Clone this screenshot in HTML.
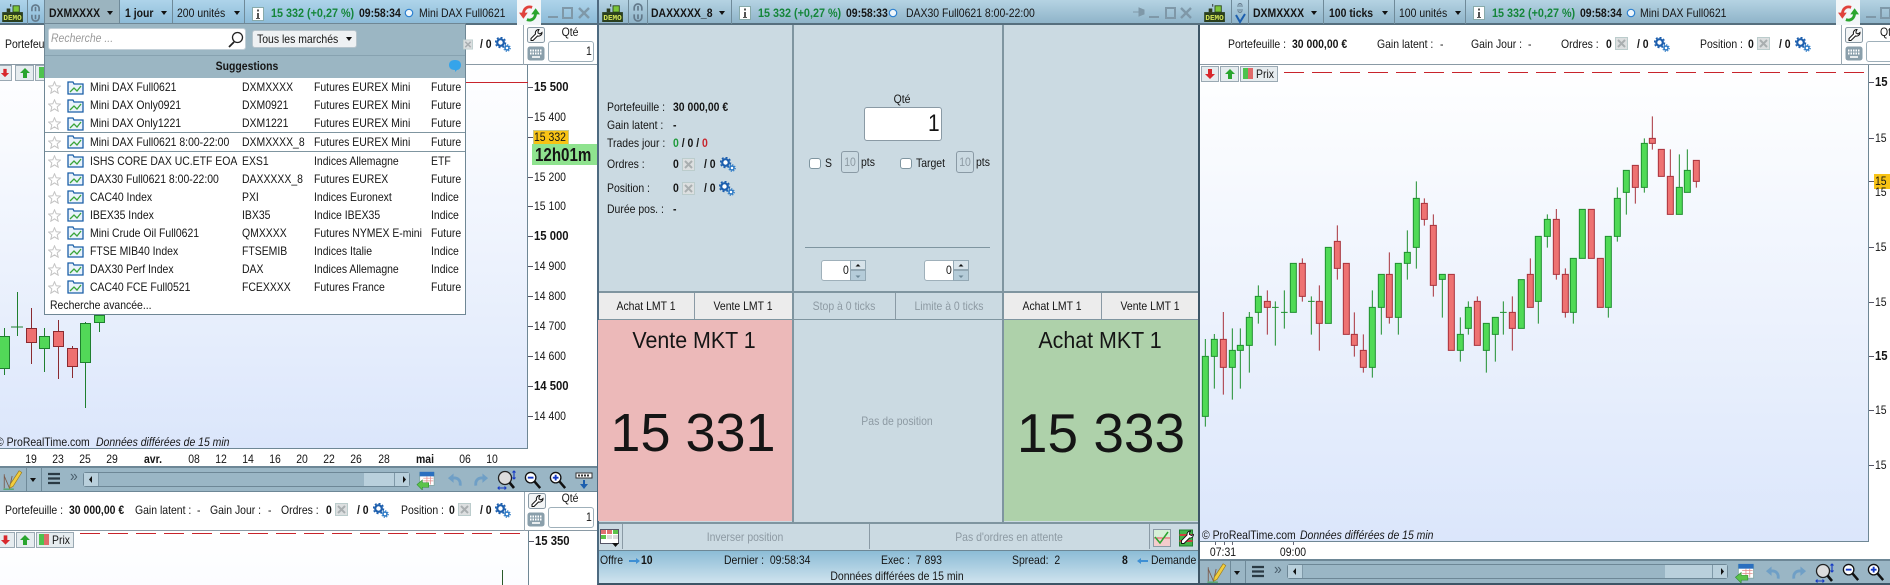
<!DOCTYPE html>
<html lang="fr"><head><meta charset="utf-8"><title>ProRealTime</title>
<style>
html,body{margin:0;padding:0;width:1890px;height:585px;overflow:hidden;background:#fff}
body{position:relative;font-family:"Liberation Sans",Arial,sans-serif;color:#151515}
.d{position:absolute;box-sizing:border-box}
.t{position:absolute;white-space:nowrap;font-size:12px;line-height:14px;transform:scaleX(.87);transform-origin:0 50%}
.c{position:absolute;white-space:nowrap;font-size:12px;line-height:14px;transform:translateX(-50%) scaleX(.87)}
.b{font-weight:bold}
.g{color:#8d9aa3}
.pr{color:#15863a;transform:scaleX(.9)}
.tb{background:linear-gradient(#b5d3e3,#8fb4c9);border-bottom:2px solid #566f7e}
.tb2{background:linear-gradient(#aed4ea,#8dbbd8);border-bottom:2px solid #566f7e}
.sep{position:absolute;width:1px;background:#6f8a99}
.chart{background:linear-gradient(#fff,#dbe6fb)}
.bar{background:#9ab6c5;border-top:2px solid #6d8796}
.btn{position:absolute;box-sizing:border-box;border:1px solid #9aa9b3;background:#e6ecef}
.inp{position:absolute;box-sizing:border-box;background:#fff;border:1px solid #9fb0ba;border-radius:3px}
.tick{position:absolute;width:5px;height:1px;background:#556}
.sb{position:absolute;box-sizing:border-box;border:1px solid #6d8796;border-radius:3px;background:#9ab6c5}
.sb i{position:absolute;top:0;bottom:0;display:block;box-sizing:border-box;background:#b9d0dc;border:0 solid #7f99a8}
.tri{position:absolute;width:0;height:0;border-left:3.5px solid transparent;border-right:3.5px solid transparent;border-top:4px solid #111}
</style></head><body>

<!-- LEFT WINDOW -->
<div class="d tb2" style="left:0;top:0;width:597px;height:25px"></div>
<div class="d" style="left:44px;top:0;width:75px;height:24px;background:#9bb4bf"></div>
<div class="sep" style="left:27px;top:0;height:24px"></div>
<div class="sep" style="left:44px;top:0;height:24px"></div>
<div class="sep" style="left:119px;top:0;height:24px"></div>
<div class="sep" style="left:172px;top:0;height:24px"></div>
<div class="sep" style="left:244px;top:0;height:24px"></div>
<span class="t b" style="left:49px;top:6px">DXMXXXX</span><div class="tri" style="left:107px;top:11px"></div>
<span class="t b" style="left:125px;top:6px">1 jour</span><div class="tri" style="left:161px;top:11px"></div>
<span class="t" style="left:177px;top:6px">200 unités</span><div class="tri" style="left:234px;top:11px"></div>
<span class="t b pr" style="left:271px;top:6px">15 332 (+0,27 %)</span>
<span class="t b" style="left:359px;top:6px">09:58:34</span>
<span class="t" style="left:419px;top:6px">Mini DAX Full0621</span>
<div class="d" style="left:517px;top:0;width:24px;height:27px;background:#f2f6f8"></div>

<div class="d" style="left:0;top:25px;width:597px;height:40px;background:#fff;border-bottom:1px solid #8a9aa5"></div>
<span class="t" style="left:5px;top:37px">Portefeuille :</span>
<span class="t b" style="left:480px;top:37px">/ 0</span>
<div class="sep" style="left:523px;top:25px;height:40px;background:#9aa9b3"></div>
<span class="c" style="left:570px;top:25px">Qté</span>
<div class="inp" style="left:548px;top:41px;width:46px;height:21px"></div>
<span class="t" style="left:586px;top:44px">1</span>

<div class="d chart" style="left:0;top:65px;width:528px;height:384px;border-right:1px solid #6f8795;border-bottom:1px solid #6f8795"></div>
<div class="d" style="left:466px;top:82px;width:62px;height:1px;background:#c8242c"></div>
<span class="t" style="left:-4px;top:435px">© ProRealTime.com</span>
<span class="t" style="left:96px;top:435px;font-style:italic">Données différées de 15 min</span>

<div class="tick" style="left:528px;top:87px"></div><span class="t b" style="left:534px;top:80px;font-size:13px">15 500</span>
<div class="tick" style="left:528px;top:117px"></div><span class="t" style="left:534px;top:110px">15 400</span>
<div class="tick" style="left:528px;top:177px"></div><span class="t" style="left:534px;top:170px">15 200</span>
<div class="tick" style="left:528px;top:206px"></div><span class="t" style="left:534px;top:199px">15 100</span>
<div class="tick" style="left:528px;top:236px"></div><span class="t b" style="left:534px;top:229px;font-size:13px">15 000</span>
<div class="tick" style="left:528px;top:266px"></div><span class="t" style="left:534px;top:259px">14 900</span>
<div class="tick" style="left:528px;top:296px"></div><span class="t" style="left:534px;top:289px">14 800</span>
<div class="tick" style="left:528px;top:326px"></div><span class="t" style="left:534px;top:319px">14 700</span>
<div class="tick" style="left:528px;top:356px"></div><span class="t" style="left:534px;top:349px">14 600</span>
<div class="tick" style="left:528px;top:386px"></div><span class="t b" style="left:534px;top:379px;font-size:13px">14 500</span>
<div class="tick" style="left:528px;top:416px"></div><span class="t" style="left:534px;top:409px">14 400</span>
<div class="tick" style="left:528px;top:137px"></div>
<div class="d" style="left:533px;top:130px;width:36px;height:15px;background:#f8c315;border:1px solid #c9c98a"></div>
<span class="t" style="left:534px;top:130px">15 332</span>
<div class="d" style="left:532px;top:144px;width:65px;height:21px;background:#8fe38f"></div>
<span class="t b" style="left:535px;top:146px;font-size:18px;line-height:18px;transform:scaleX(.84)">12h01m</span>

<span class="c" style="left:31px;top:452px">19</span><span class="c" style="left:58px;top:452px">23</span><span class="c" style="left:85px;top:452px">25</span><span class="c" style="left:112px;top:452px">29</span><span class="c b" style="left:153px;top:452px">avr.</span><span class="c" style="left:194px;top:452px">08</span><span class="c" style="left:221px;top:452px">12</span><span class="c" style="left:248px;top:452px">14</span><span class="c" style="left:275px;top:452px">16</span><span class="c" style="left:302px;top:452px">20</span><span class="c" style="left:329px;top:452px">22</span><span class="c" style="left:356px;top:452px">26</span><span class="c" style="left:384px;top:452px">28</span><span class="c b" style="left:425px;top:452px">mai</span><span class="c" style="left:465px;top:452px">06</span><span class="c" style="left:492px;top:452px">10</span>

<div class="d bar" style="left:0;top:466px;width:597px;height:26px;border-bottom:1px solid #6d8796"></div>
<div class="sep" style="left:26px;top:468px;height:23px"></div><div class="sep" style="left:41px;top:468px;height:23px"></div>
<div class="tri" style="left:30px;top:478px"></div>
<span class="t" style="left:70px;top:470px;color:#4b5f6c;font-size:16px">»</span>
<div class="sb" style="left:83px;top:472px;width:327px;height:15px"><i style="left:0;width:15px;border-right-width:1px"></i><i style="left:280px;width:31px;border-right-width:1px"></i><i style="right:0;width:15px;border-left-width:1px"></i></div>

<div class="d" style="left:0;top:492px;width:597px;height:39px;background:#fff;border-bottom:1px solid #8a9aa5"></div>
<span class="t" style="left:5px;top:503px">Portefeuille :</span><span class="t b" style="left:69px;top:503px">30 000,00 €</span>
<span class="t" style="left:135px;top:503px">Gain latent :</span><span class="t" style="left:197px;top:503px">-</span>
<span class="t" style="left:210px;top:503px">Gain Jour :</span><span class="t" style="left:268px;top:503px">-</span>
<span class="t" style="left:281px;top:503px">Ordres :</span><span class="t b" style="left:326px;top:503px">0</span><span class="t b" style="left:357px;top:503px">/ 0</span>
<span class="t" style="left:401px;top:503px">Position :</span><span class="t b" style="left:449px;top:503px">0</span><span class="t b" style="left:480px;top:503px">/ 0</span>
<div class="sep" style="left:524px;top:492px;height:39px;background:#9aa9b3"></div>
<span class="c" style="left:570px;top:491px">Qté</span>
<div class="inp" style="left:548px;top:507px;width:46px;height:21px"></div>
<span class="t" style="left:586px;top:510px">1</span>

<div class="d chart" style="left:0;top:531px;width:529px;height:60px;background:linear-gradient(#fff,#fbfcff);border-right:1px solid #6f8795"></div>
<div class="d" style="left:80px;top:533px;width:443px;height:1px;background:repeating-linear-gradient(90deg,#c8242c 0 20px,transparent 20px 28px)"></div>
<div class="tick" style="left:529px;top:541px"></div><span class="t b" style="left:535px;top:534px;font-size:13px">15 350</span>
<div class="btn" style="left:-2px;top:532px;width:17px;height:16px"></div>
<div class="btn" style="left:16px;top:532px;width:19px;height:16px"></div>
<div class="btn" style="left:36px;top:532px;width:38px;height:16px"></div>
<div class="d" style="left:39px;top:534px;width:5px;height:11px;background:#4ec24e"></div>
<div class="d" style="left:44px;top:534px;width:5px;height:11px;background:#e06a6a"></div>
<span class="t" style="left:52px;top:533px">Prix</span>

<!-- top row buttons, left chart -->
<div class="btn" style="left:-5px;top:65px;width:17px;height:16px"></div>
<div class="btn" style="left:15px;top:65px;width:19px;height:16px"></div>
<div class="btn" style="left:35px;top:65px;width:12px;height:16px"></div>
<div class="d" style="left:39px;top:67px;width:5px;height:11px;background:#4ec24e"></div>

<!-- left candles -->
<svg class="d" style="left:0;top:0" width="597" height="585">
<g stroke-width="1" shape-rendering="crispEdges">
<path stroke="#1f7f2f" d="M4.500 328V375M17.500 292V336M44.500 328V372M85.500 322V408M99.500 314V332M11 327H23"/>
<path stroke="#8a2a30" d="M31.500 308V364M58.500 320V379M72.500 346V378"/>
<path fill="#52d858" stroke="#1f7f2f" d="M-1.500 336.500h11V368.500h-11zM39.500 336.500h10V348.500h-10zM80.500 323.500h10V362.500h-10zM94.500 315.500h10V322.500h-10z"/>
<path fill="#ee7070" stroke="#8a2a30" d="M26.500 328.500h10V342.500h-10zM53.500 331.500h10V346.500h-10zM67.500 348.500h10V366.500h-10z"/>
</g>
<path stroke="#2a5a2a" d="M502.500 570V585"/>
</svg>

<!-- DROPDOWN -->
<div class="d" style="left:44px;top:23px;width:422px;height:292px;background:#fff;border:1px solid #6f8795">
 <div class="d" style="left:0;top:0;width:420px;height:54px;background:#9bb6c3"></div>
 <div class="d" style="left:0;top:31px;width:420px;height:1px;background:#87a2b0"></div>
</div>
<div class="inp" style="left:48px;top:28px;width:198px;height:22px;border-color:#c3d0d8"></div>
<span class="t" style="left:51px;top:31px;color:#9a9a9a;font-style:italic">Recherche ...</span>
<div class="d" style="left:252px;top:30px;width:105px;height:18px;background:#eef1f3;border:1px solid #b6c4cc;border-radius:3px"></div>
<span class="t" style="left:257px;top:32px">Tous les marchés</span><div class="tri" style="left:346px;top:37px"></div>
<span class="c b" style="left:247px;top:59px">Suggestions</span>
<div class="d" style="left:45px;top:132px;width:420px;height:1px;background:#7f95a0"></div>
<div class="d" style="left:45px;top:151px;width:420px;height:1px;background:#7f95a0"></div>

<span class="t" style="left:90px;top:80px">Mini DAX Full0621</span><span class="t" style="left:242px;top:80px">DXMXXXX</span><span class="t" style="left:314px;top:80px">Futures EUREX Mini</span><span class="t" style="left:431px;top:80px">Future</span>
<span class="t" style="left:90px;top:98px">Mini DAX Only0921</span><span class="t" style="left:242px;top:98px">DXM0921</span><span class="t" style="left:314px;top:98px">Futures EUREX Mini</span><span class="t" style="left:431px;top:98px">Future</span>
<span class="t" style="left:90px;top:116px">Mini DAX Only1221</span><span class="t" style="left:242px;top:116px">DXM1221</span><span class="t" style="left:314px;top:116px">Futures EUREX Mini</span><span class="t" style="left:431px;top:116px">Future</span>
<span class="t" style="left:90px;top:135px">Mini DAX Full0621 8:00-22:00</span><span class="t" style="left:242px;top:135px">DXMXXXX_8</span><span class="t" style="left:314px;top:135px">Futures EUREX Mini</span><span class="t" style="left:431px;top:135px">Future</span>
<span class="t" style="left:90px;top:154px">ISHS CORE DAX UC.ETF EOA</span><span class="t" style="left:242px;top:154px">EXS1</span><span class="t" style="left:314px;top:154px">Indices Allemagne</span><span class="t" style="left:431px;top:154px">ETF</span>
<span class="t" style="left:90px;top:172px">DAX30 Full0621 8:00-22:00</span><span class="t" style="left:242px;top:172px">DAXXXXX_8</span><span class="t" style="left:314px;top:172px">Futures EUREX</span><span class="t" style="left:431px;top:172px">Future</span>
<span class="t" style="left:90px;top:190px">CAC40 Index</span><span class="t" style="left:242px;top:190px">PXI</span><span class="t" style="left:314px;top:190px">Indices Euronext</span><span class="t" style="left:431px;top:190px">Indice</span>
<span class="t" style="left:90px;top:208px">IBEX35 Index</span><span class="t" style="left:242px;top:208px">IBX35</span><span class="t" style="left:314px;top:208px">Indice IBEX35</span><span class="t" style="left:431px;top:208px">Indice</span>
<span class="t" style="left:90px;top:226px">Mini Crude Oil Full0621</span><span class="t" style="left:242px;top:226px">QMXXXX</span><span class="t" style="left:314px;top:226px">Futures NYMEX E-mini</span><span class="t" style="left:431px;top:226px">Future</span>
<span class="t" style="left:90px;top:244px">FTSE MIB40 Index</span><span class="t" style="left:242px;top:244px">FTSEMIB</span><span class="t" style="left:314px;top:244px">Indices Italie</span><span class="t" style="left:431px;top:244px">Indice</span>
<span class="t" style="left:90px;top:262px">DAX30 Perf Index</span><span class="t" style="left:242px;top:262px">DAX</span><span class="t" style="left:314px;top:262px">Indices Allemagne</span><span class="t" style="left:431px;top:262px">Indice</span>
<span class="t" style="left:90px;top:280px">CAC40 FCE Full0521</span><span class="t" style="left:242px;top:280px">FCEXXXX</span><span class="t" style="left:314px;top:280px">Futures France</span><span class="t" style="left:431px;top:280px">Future</span>
<span class="t" style="left:50px;top:298px">Recherche avancée...</span>

<!-- MIDDLE WINDOW -->
<div class="d" style="left:597px;top:0;width:603px;height:585px;background:#cbdae2;border-left:2px solid #4e6a80;border-right:2px solid #3d5566;border-bottom:2px solid #3d5566"></div>
<div class="d tb" style="left:597px;top:0;width:603px;height:25px;border-left:2px solid #4e6a80"></div>
<div class="sep" style="left:628px;top:0;height:24px"></div><div class="sep" style="left:647px;top:0;height:24px"></div><div class="sep" style="left:731px;top:0;height:24px"></div>
<span class="t b" style="left:651px;top:6px">DAXXXXX_8</span><div class="tri" style="left:719px;top:11px"></div>
<span class="t b pr" style="left:758px;top:6px">15 332 (+0,27 %)</span>
<span class="t b" style="left:846px;top:6px">09:58:33</span>
<span class="t" style="left:906px;top:6px">DAX30 Full0621 8:00-22:00</span>

<div class="d" style="left:792px;top:25px;width:2px;height:497px;background:#7f95a0"></div>
<div class="d" style="left:1002px;top:25px;width:2px;height:497px;background:#7f95a0"></div>

<span class="t" style="left:607px;top:100px">Portefeuille :</span><span class="t b" style="left:673px;top:100px">30 000,00 €</span>
<span class="t" style="left:607px;top:118px">Gain latent :</span><span class="t b" style="left:673px;top:118px">-</span>
<span class="t" style="left:607px;top:136px">Trades jour :</span><span class="t b" style="left:673px;top:136px"><span style="color:#1e9a3a">0</span> / 0 / <span style="color:#c8242c">0</span></span>
<span class="t" style="left:607px;top:157px">Ordres :</span><span class="t b" style="left:673px;top:157px">0</span><span class="t b" style="left:704px;top:157px">/ 0</span>
<span class="t" style="left:607px;top:181px">Position :</span><span class="t b" style="left:673px;top:181px">0</span><span class="t b" style="left:704px;top:181px">/ 0</span>
<span class="t" style="left:607px;top:202px">Durée pos. :</span><span class="t b" style="left:673px;top:202px">-</span>

<span class="c" style="left:902px;top:92px">Qté</span>
<div class="inp" style="left:864px;top:107px;width:78px;height:34px;border-color:#8a9aa5"></div>
<span class="t" style="left:928px;top:110px;font-size:24px;line-height:28px">1</span>
<div class="inp" style="left:809px;top:158px;width:12px;height:11px;border-color:#7f95a0"></div>
<span class="t" style="left:825px;top:156px">S</span>
<div class="d" style="left:841px;top:151px;width:18px;height:22px;border:1px solid #8a9aa5;border-radius:3px"></div>
<span class="c g" style="left:850px;top:155px">10</span>
<span class="t" style="left:861px;top:155px">pts</span>
<div class="inp" style="left:900px;top:158px;width:12px;height:11px;border-color:#7f95a0"></div>
<span class="t" style="left:916px;top:156px">Target</span>
<div class="d" style="left:956px;top:151px;width:18px;height:22px;border:1px solid #8a9aa5;border-radius:3px"></div>
<span class="c g" style="left:965px;top:155px">10</span>
<span class="t" style="left:976px;top:155px">pts</span>
<div class="d" style="left:805px;top:247px;width:185px;height:1px;background:#7f95a0"></div>

<div class="inp" style="left:821px;top:260px;width:45px;height:21px"></div><span class="t" style="left:843px;top:263px">0</span>
<div class="d" style="left:850px;top:260px;width:16px;height:10px;background:#d7e3ea;border:1px solid #93a8b4"></div><div class="d" style="left:850px;top:270px;width:16px;height:11px;background:#b5ccd9;border:1px solid #93a8b4"></div>
<div class="inp" style="left:924px;top:260px;width:45px;height:21px"></div><span class="t" style="left:946px;top:263px">0</span>
<div class="d" style="left:953px;top:260px;width:16px;height:10px;background:#d7e3ea;border:1px solid #93a8b4"></div><div class="d" style="left:953px;top:270px;width:16px;height:11px;background:#b5ccd9;border:1px solid #93a8b4"></div>

<div class="d" style="left:599px;top:291px;width:599px;height:2px;background:#7f95a0"></div>
<div class="d" style="left:599px;top:293px;width:193px;height:26px;background:#ececec"></div>
<div class="d" style="left:1004px;top:293px;width:194px;height:26px;background:#ececec"></div>
<div class="sep" style="left:694px;top:293px;height:26px;background:#8a9aa5"></div>
<div class="sep" style="left:895px;top:293px;height:26px;background:#8a9aa5"></div>
<div class="sep" style="left:1101px;top:293px;height:26px;background:#8a9aa5"></div>
<span class="c" style="left:646px;top:299px">Achat LMT 1</span>
<span class="c" style="left:743px;top:299px">Vente LMT 1</span>
<span class="c g" style="left:844px;top:299px">Stop à 0 ticks</span>
<span class="c g" style="left:949px;top:299px">Limite à 0 ticks</span>
<span class="c" style="left:1052px;top:299px">Achat LMT 1</span>
<span class="c" style="left:1150px;top:299px">Vente LMT 1</span>

<div class="d" style="left:599px;top:319px;width:599px;height:1px;background:#7f95a0"></div>
<div class="d" style="left:598px;top:320px;width:194px;height:201px;background:#ecb9b9"></div>
<div class="d" style="left:1004px;top:320px;width:194px;height:201px;background:#aed1aa"></div>
<span class="c" style="left:694px;top:326px;font-size:23px;line-height:28px;transform:translateX(-50%) scaleX(.93)">Vente MKT 1</span>
<span class="c" style="left:1100px;top:326px;font-size:23px;line-height:28px;transform:translateX(-50%) scaleX(.93)">Achat MKT 1</span>
<span class="c" style="left:693px;top:401px;font-size:54px;line-height:64px;transform:translateX(-50%)">15 331</span>
<span class="c" style="left:1101px;top:401px;font-size:55px;line-height:64px;transform:translateX(-50%)">15 333</span>
<span class="c g" style="left:897px;top:414px">Pas de position</span>

<div class="d" style="left:599px;top:522px;width:599px;height:2px;background:#7f95a0"></div>
<div class="sep" style="left:622px;top:524px;height:25px;background:#8a9aa5"></div>
<div class="sep" style="left:869px;top:524px;height:25px;background:#8a9aa5"></div>
<div class="sep" style="left:1149px;top:524px;height:25px;background:#8a9aa5"></div>
<span class="c g" style="left:745px;top:530px">Inverser position</span>
<span class="c g" style="left:1009px;top:530px">Pas d'ordres en attente</span>

<div class="d" style="left:599px;top:550px;width:599px;height:33px;background:linear-gradient(#8cbcd6,#cfe3ee);border-top:1px solid #6d8796"></div>
<span class="t" style="left:600px;top:553px">Offre</span><span class="t b" style="left:641px;top:553px">10</span>
<span class="t" style="left:724px;top:553px">Dernier :&nbsp; 09:58:34</span>
<span class="t" style="left:881px;top:553px">Exec :&nbsp; 7 893</span>
<span class="t" style="left:1012px;top:553px">Spread:&nbsp; 2</span>
<span class="t b" style="left:1122px;top:553px">8</span>
<span class="t" style="left:1151px;top:553px">Demande</span>
<span class="c" style="left:897px;top:569px">Données différées de 15 min</span>

<!-- RIGHT WINDOW -->
<div class="d tb" style="left:1200px;top:0;width:690px;height:25px"></div>
<div class="sep" style="left:1231px;top:0;height:24px"></div><div class="sep" style="left:1248px;top:0;height:24px"></div><div class="sep" style="left:1323px;top:0;height:24px"></div><div class="sep" style="left:1394px;top:0;height:24px"></div><div class="sep" style="left:1465px;top:0;height:24px"></div>
<span class="t b" style="left:1253px;top:6px">DXMXXXX</span><div class="tri" style="left:1311px;top:11px"></div>
<span class="t b" style="left:1329px;top:6px">100 ticks</span><div class="tri" style="left:1382px;top:11px"></div>
<span class="t" style="left:1399px;top:6px">100 unités</span><div class="tri" style="left:1455px;top:11px"></div>
<span class="t b pr" style="left:1492px;top:6px">15 332 (+0,27 %)</span>
<span class="t b" style="left:1580px;top:6px">09:58:34</span>
<span class="t" style="left:1640px;top:6px">Mini DAX Full0621</span>
<div class="d" style="left:1836px;top:0;width:24px;height:27px;background:#f2f6f8"></div>

<div class="d" style="left:1200px;top:25px;width:690px;height:40px;background:#fff;border-bottom:1px solid #8a9aa5"></div>
<span class="t" style="left:1228px;top:37px">Portefeuille :</span><span class="t b" style="left:1292px;top:37px">30 000,00 €</span>
<span class="t" style="left:1377px;top:37px">Gain latent :</span><span class="t" style="left:1440px;top:37px">-</span>
<span class="t" style="left:1471px;top:37px">Gain Jour :</span><span class="t" style="left:1528px;top:37px">-</span>
<span class="t" style="left:1561px;top:37px">Ordres :</span><span class="t b" style="left:1606px;top:37px">0</span><span class="t b" style="left:1637px;top:37px">/ 0</span>
<span class="t" style="left:1700px;top:37px">Position :</span><span class="t b" style="left:1748px;top:37px">0</span><span class="t b" style="left:1779px;top:37px">/ 0</span>
<div class="sep" style="left:1841px;top:25px;height:40px;background:#9aa9b3"></div>
<span class="t" style="left:1880px;top:25px">Qté</span>
<div class="inp" style="left:1866px;top:41px;width:46px;height:21px"></div>

<div class="d chart" style="left:1200px;top:65px;width:669px;height:477px;border-right:1px solid #6f8795;border-bottom:1px solid #6f8795"></div>
<div class="d" style="left:1284px;top:72px;width:580px;height:1px;background:repeating-linear-gradient(90deg,#c8242c 0 20px,transparent 20px 28px)"></div>
<div class="btn" style="left:1201px;top:66px;width:18px;height:16px"></div>
<div class="btn" style="left:1220px;top:66px;width:19px;height:16px"></div>
<div class="btn" style="left:1240px;top:66px;width:38px;height:16px"></div>
<div class="d" style="left:1243px;top:68px;width:5px;height:11px;background:#4ec24e"></div>
<div class="d" style="left:1248px;top:68px;width:5px;height:11px;background:#e06a6a"></div>
<span class="t" style="left:1256px;top:67px">Prix</span>
<span class="t" style="left:1202px;top:528px">© ProRealTime.com</span>
<span class="t" style="left:1300px;top:528px;font-style:italic">Données différées de 15 min</span>

<div class="tick" style="left:1869px;top:82px"></div><span class="t b" style="left:1875px;top:75px;font-size:13px">15</span>
<div class="tick" style="left:1869px;top:138px"></div><span class="t" style="left:1875px;top:131px">15</span>
<div class="tick" style="left:1869px;top:181px"></div>
<div class="d" style="left:1874px;top:174px;width:18px;height:15px;background:#f8c315"></div><span class="t" style="left:1875px;top:174px">15</span>
<span class="t" style="left:1875px;top:185px">15</span>
<div class="tick" style="left:1869px;top:247px"></div><span class="t" style="left:1875px;top:240px">15</span>
<div class="tick" style="left:1869px;top:302px"></div><span class="t" style="left:1875px;top:295px">15</span>
<div class="tick" style="left:1869px;top:356px"></div><span class="t b" style="left:1875px;top:349px;font-size:13px">15</span>
<div class="tick" style="left:1869px;top:410px"></div><span class="t" style="left:1875px;top:403px">15</span>
<div class="tick" style="left:1869px;top:465px"></div><span class="t" style="left:1875px;top:458px">15</span>

<span class="c" style="left:1223px;top:545px">07:31</span><span class="c" style="left:1293px;top:545px">09:00</span>
<div class="d" style="left:1215px;top:542px;width:1px;height:3px;background:#667"></div><div class="d" style="left:1224px;top:542px;width:1px;height:3px;background:#667"></div><div class="d" style="left:1232px;top:542px;width:1px;height:3px;background:#667"></div><div class="d" style="left:1293px;top:542px;width:1px;height:3px;background:#667"></div>

<div class="d bar" style="left:1200px;top:559px;width:690px;height:26px;border-bottom:2px solid #3d5566"></div>
<div class="sep" style="left:1230px;top:561px;height:22px"></div><div class="sep" style="left:1245px;top:561px;height:22px"></div>
<div class="tri" style="left:1234px;top:571px"></div>
<span class="t" style="left:1274px;top:563px;color:#4b5f6c;font-size:16px">»</span>
<div class="sb" style="left:1287px;top:564px;width:441px;height:15px"><i style="left:0;width:15px;border-right-width:1px"></i><i style="left:377px;width:49px;border-right-width:1px"></i><i style="right:0;width:15px;border-left-width:1px"></i></div>

<!-- right candles -->
<svg class="d" style="left:0;top:0" width="1890" height="585">
<g transform="translate(1198 100) scale(.33333)" stroke-width="3">
 <path fill="none" stroke="#1f8f2f" d="M22 717V980M49 702V866M103 685V899M127 685V866M154 636V818M181 556V671M232 604V737M222 622H242M259 571V686M249 637H269M340 589V704M330 604H350M523 571V833M550 523V704M601 490V704M628 391V539M655 244V506M733 523V653M787 652V785"/>
 <path fill="none" stroke="#a8323c" d="M76 636V884M208 571V704M313 475V605M364 556V752M418 376V539M469 637V770M496 703V818M574 457V671M679 295V377M706 343V590"/>
 <path fill="#50da56" stroke="#1f8f2f" d="M13 769h18V949h-18zM40 718h18V769h-18zM94 751h18V802h-18zM118 736h18V751h-18zM145 652h18V736h-18zM172 589h18V637h-18zM277 490h18V637h-18zM382 442h18V670h-18zM514 622h18V802h-18zM541 523h18V622h-18zM592 490h18V652h-18zM619 457h18V490h-18zM646 295h18V442h-18zM724 523h18V538h-18zM778 703h18V751h-18z"/>
 <path fill="#ee7272" stroke="#a8323c" d="M67 718h18V802h-18zM199 604h18V622h-18zM304 490h18V589h-18zM355 604h18V670h-18zM409 424h18V505h-18zM436 490h18V703h-18zM460 703h18V736h-18zM487 751h18V802h-18zM565 523h18V652h-18zM670 310h18V358h-18zM697 376h18V556h-18zM751 523h18V751h-18z"/>
</g>
<g transform="translate(1460 100) scale(.33333)" stroke-width="3">
 <path fill="none" stroke="#1f8f2f" d="M25 604V704M79 670V818M106 652V785M130 604V704M120 637H140M235 409V671M262 343V443M340 475V671M445 409V653M472 262V425M499 211V344M553 115V278M658 163V343M682 148V277"/>
 <path fill="none" stroke="#a8323c" d="M52 589V736M157 589V752M211 475V622M289 327V539M316 505V653M526 196V311M577 49V149M631 148V343M709 181V263"/>
 <path fill="#50da56" stroke="#1f8f2f" d="M16 622h18V685h-18zM70 670h18V751h-18zM97 652h18V703h-18zM175 539h18V685h-18zM226 409h18V604h-18zM253 358h18V409h-18zM331 475h18V637h-18zM358 328h18V475h-18zM436 409h18V622h-18zM463 295h18V409h-18zM490 211h18V277h-18zM544 130h18V262h-18zM649 262h18V343h-18zM673 211h18V277h-18z"/>
 <path fill="#ee7272" stroke="#a8323c" d="M43 604h18V736h-18zM148 637h18V685h-18zM202 523h18V622h-18zM280 358h18V523h-18zM307 523h18V637h-18zM385 328h18V475h-18zM412 475h18V622h-18zM517 196h18V262h-18zM568 115h18V130h-18zM595 148h18V229h-18zM622 229h18V343h-18zM700 181h18V244h-18z"/>
</g>
</svg>

<!-- ICONS -->
<svg class="d" style="left:0;top:0;pointer-events:none" width="1890" height="585" font-family="Liberation Sans, sans-serif">
<defs>
 <symbol id="demo" viewBox="0 0 24 20" overflow="visible"><rect x="9" y="0" width="1" height="3" fill="#222"/><rect x="12" y="2" width="7" height="7" fill="#7cc63a" stroke="#2c4a1a"/><rect x="5" y="5" width="4" height="4" fill="#2c3a1c"/><rect x="0" y="9" width="23" height="11" fill="#2a3f1d"/><text x="11.500" y="18" font-size="8.500" font-weight="bold" fill="#d3e65a" text-anchor="middle" font-family="Liberation Mono, monospace">DEMO</text></symbol>
 <symbol id="link" viewBox="0 0 12 20"><path d="M2 8V5a4 4 0 0 1 8 0v3M6 3v5M2 12v3a4 4 0 0 0 8 0v-3M6 12v5" fill="none" stroke="#63798a" stroke-width="1.800"/></symbol>
 <symbol id="info" viewBox="0 0 12 14"><rect x=".5" y=".5" width="11" height="13" fill="#fff" stroke="#8aa"/><rect x="5" y="2.500" width="2" height="2" fill="#555"/><rect x="5" y="6" width="2" height="6" fill="#555"/><rect x="4" y="11" width="4" height="1" fill="#555"/></symbol>
 <symbol id="ring" viewBox="0 0 10 10"><circle cx="5" cy="5" r="3.700" fill="#eef6fb" stroke="#2a7fd0" stroke-width="1.200"/></symbol>
 <symbol id="sync" viewBox="0 0 24 24"><path d="M15 5C9 3 5 7 5 13" fill="none" stroke="#e0423c" stroke-width="3.200"/><path d="M0 11h10l-5 7z" fill="#e0423c"/><path d="M9 19c6 2 10-2 10-8" fill="none" stroke="#2aa52e" stroke-width="3.200"/><path d="M14 13h10l-5-7z" fill="#2aa52e"/></symbol>
 <symbol id="wr" viewBox="0 0 18 16"><rect x=".5" y=".5" width="17" height="15" rx="2" fill="#f3f5f6" stroke="#8a9aa5"/><path d="M12 2.500a3.500 3.500 0 0 0-3.500 4.500L4 11.500v2h2L10.500 9a3.500 3.500 0 0 0 4.500-3.500l-2 1.500-2-1V4.500z" fill="#fff" stroke="#111" stroke-width="1"/></symbol>
 <symbol id="kb" viewBox="0 0 18 15"><rect x=".5" y=".5" width="17" height="14" rx="2.500" fill="#8a9fab"/><path d="M3 4.500h12M3 7.500h12" stroke="#fff" stroke-width="2" stroke-dasharray="1.500 1"/><path d="M5 11h8" stroke="#fff" stroke-width="1.600"/></symbol>
 <symbol id="gear" viewBox="0 0 16 15"><circle cx="5.500" cy="5.500" r="3.300" fill="#fff" stroke="#1d5fae" stroke-width="2.200"/><circle cx="5.500" cy="5.500" r="5" fill="none" stroke="#1d5fae" stroke-width="1.500" stroke-dasharray="2 1.900"/><circle cx="12" cy="11" r="2" fill="#fff" stroke="#2a78c4" stroke-width="1.500"/><circle cx="12" cy="11" r="3.300" fill="none" stroke="#2a78c4" stroke-width="1" stroke-dasharray="1.300 1.300"/></symbol>
 <symbol id="xd" viewBox="0 0 13 13"><rect x=".5" y=".5" width="12" height="12" fill="#dcdfe0" stroke="#bcc"/><path d="M3 3l7 7M10 3l-7 7" stroke="#a9aeb0" stroke-width="2"/></symbol>
 <symbol id="star" viewBox="0 0 13 13"><polygon points="6.500,.8 8.200,4.800 12.400,5.100 9.200,7.900 10.200,12.200 6.500,9.900 2.800,12.200 3.800,7.900 .6,5.100 4.800,4.800" fill="#fff" stroke="#c4c4c4"/></symbol>
 <symbol id="mini" viewBox="0 0 17 14"><path d="M1 1h5l1 2h9v10H1z" fill="#eaf3fb" stroke="#1b5fa8" stroke-width="1.300"/><path d="M3 11l4-4 3 3 4-5" fill="none" stroke="#3aa53a" stroke-width="1.300"/></symbol>
 <symbol id="dn" viewBox="0 0 12 12"><path d="M4 1h4v5h3L6 11 1 6h3z" fill="#d8282c"/></symbol>
 <symbol id="up" viewBox="0 0 12 12"><path d="M4 11h4V6h3L6 1 1 6h3z" fill="#2aa52e"/></symbol>
 <symbol id="draw" viewBox="0 0 24 24"><path d="M2 8l6 14M2 22V6M8 22l3-14" stroke="#7b5a4a" stroke-width="1" fill="none"/><path d="M1 23h12" stroke="#2a9a3a" stroke-width="1"/><path d="M19 2l3 2-10 16-4 2 1-5z" fill="#f2cd3c" stroke="#9a7d20" stroke-width=".8"/></symbol>
 <symbol id="ham" viewBox="0 0 14 13"><path d="M1 2h12M1 6.500h12M1 11h12" stroke="#2a3a44" stroke-width="2.200"/></symbol>
 <symbol id="cal" viewBox="0 0 20 22"><rect x="3" y="3" width="16" height="14" fill="#fff" stroke="#8aa"/><rect x="3" y="2" width="16" height="5" fill="#2a6fbf"/><path d="M7 9h11M7 12h11M11 7v9M15 7v9" stroke="#e08a8a" stroke-width=".8"/><path d="M0 16l6-5v3h7v5H6v3z" fill="#5cc34a" stroke="#2a8a2a" stroke-width=".6"/></symbol>
 <symbol id="und" viewBox="0 0 16 16"><path d="M14 14c1-6-3-9-8-8" fill="none" stroke="#6f9fc6" stroke-width="3"/><path d="M7 1L1 6l6 5z" fill="#6f9fc6"/></symbol>
 <symbol id="red" viewBox="0 0 16 16"><path d="M2 14c-1-6 3-9 8-8" fill="none" stroke="#6f9fc6" stroke-width="3"/><path d="M9 1l6 5-6 5z" fill="#6f9fc6"/></symbol>
 <symbol id="zf" viewBox="0 0 20 20"><circle cx="8" cy="8" r="6.500" fill="#ddd" stroke="#222" stroke-width="1.300"/><path d="M12.500 12.500L17 18" stroke="#111" stroke-width="2.600"/><path d="M17 1v8M15.500 2.500L17 1l1.500 1.500M15.500 7.500L17 9l1.500-1.500M1 18h8M2.500 16.500L1 18l1.500 1.500M7.500 16.500L9 18l-1.500 1.500" stroke="#1539c4" fill="none" stroke-width="1.100"/></symbol>
 <symbol id="zm" viewBox="0 0 20 20"><circle cx="7" cy="7" r="5.500" fill="#fff" stroke="#111" stroke-width="1.400"/><path d="M11 11l6 7" stroke="#111" stroke-width="2.600"/><path d="M4 7h6" stroke="#1539c4" stroke-width="2"/></symbol>
 <symbol id="zp" viewBox="0 0 20 20"><circle cx="7" cy="7" r="5.500" fill="#fff" stroke="#111" stroke-width="1.400"/><path d="M11 11l6 7" stroke="#111" stroke-width="2.600"/><path d="M4 7h6M7 4v6" stroke="#1539c4" stroke-width="2"/></symbol>
 <symbol id="dots" viewBox="0 0 18 18"><rect x="1" y="1" width="16" height="5" fill="#fff" stroke="#333"/><path d="M3 3.500h12" stroke="#333" stroke-width="2" stroke-dasharray="2 1"/><path d="M9 8v6" stroke="#1d5fae" stroke-width="2"/><path d="M5 12h8l-4 5z" fill="#1d5fae"/></symbol>
 <symbol id="tbl" viewBox="0 0 20 18"><rect x=".5" y=".5" width="18" height="14" fill="#fff" stroke="#556"/><rect x="1" y="1" width="5" height="4" fill="#e07070"/><rect x="7" y="1" width="5" height="4" fill="#e07070"/><rect x="13" y="1" width="5" height="4" fill="#5cc34a"/><rect x="1" y="6" width="5" height="4" fill="#5cc34a"/><rect x="7" y="6" width="5" height="4" fill="#ddd"/><rect x="13" y="6" width="5" height="4" fill="#ddd"/><path d="M12 14h7l-3.500 4z" fill="#111"/></symbol>
 <symbol id="pos" viewBox="0 0 18 18"><rect x=".5" y=".5" width="17" height="17" fill="#fff" stroke="#8a9aa5"/><rect x="1" y="1" width="16" height="7" fill="#d7f0d7"/><rect x="1" y="10" width="16" height="7" fill="#f4cccc"/><path d="M1 9h16" stroke="#d03030"/><path d="M2 8l5 6 8-11" fill="none" stroke="#2aa52e" stroke-width="1.500"/></symbol>
 <symbol id="posw" viewBox="0 0 16 18"><rect x="1" y="1" width="13" height="16" fill="#43b54a" stroke="#1f7f2f"/><path d="M1 6h13M1 12h13" stroke="#d04040" stroke-width="2"/><path d="M12 2a3.500 3.500 0 0 0-3.500 4L3 11.500v3h2.500L11 9a3.500 3.500 0 0 0 4-3.500l-2 1-2-1V4z" fill="#fff" stroke="#111" stroke-width=".9"/></symbol>
 <symbol id="bub" viewBox="0 0 14 14"><path d="M7 1c4 0 6 2 6 5 0 3-2 5-4 5l-2 2v-2C3 11 1 9 1 6c0-3 2-5 6-5z" fill="#35a4ea"/></symbol>
</defs>
<use href="#demo" x="2" y="4" width="22" height="18"/><use href="#link" x="30" y="4" width="11" height="18"/><use href="#info" x="252" y="7" width="12" height="14"/><use href="#ring" x="404" y="8" width="10" height="10"/><use href="#sync" x="519" y="3" width="21" height="21"/>
<path d="M548 17h10" stroke="#7f98a8" stroke-width="2"/><rect x="563" y="8" width="9" height="10" fill="none" stroke="#7f98a8" stroke-width="2"/><path d="M579 8l10 10M589 8l-10 10" stroke="#7f98a8" stroke-width="2.400"/>
<use href="#wr" x="527" y="27" width="18" height="16"/><use href="#kb" x="527" y="46" width="18" height="15"/>
<use href="#gear" x="495" y="37" width="16" height="15"/>
<use href="#xd" x="463" y="38" width="10" height="13"/>
<use href="#dn" x="0" y="67" width="10" height="12"/><use href="#up" x="19" y="67" width="12" height="12"/>
<use href="#bub" x="448" y="59" width="14" height="14"/>
<use href="#star" x="48" y="81" width="13" height="13"/><use href="#mini" x="67" y="81" width="17" height="14"/>
<use href="#star" x="48" y="99" width="13" height="13"/><use href="#mini" x="67" y="99" width="17" height="14"/>
<use href="#star" x="48" y="117" width="13" height="13"/><use href="#mini" x="67" y="117" width="17" height="14"/>
<use href="#star" x="48" y="136" width="13" height="13"/><use href="#mini" x="67" y="135" width="17" height="14"/>
<use href="#star" x="48" y="155" width="13" height="13"/><use href="#mini" x="67" y="154" width="17" height="14"/>
<use href="#star" x="48" y="173" width="13" height="13"/><use href="#mini" x="67" y="172" width="17" height="14"/>
<use href="#star" x="48" y="191" width="13" height="13"/><use href="#mini" x="67" y="190" width="17" height="14"/>
<use href="#star" x="48" y="209" width="13" height="13"/><use href="#mini" x="67" y="208" width="17" height="14"/>
<use href="#star" x="48" y="227" width="13" height="13"/><use href="#mini" x="67" y="226" width="17" height="14"/>
<use href="#star" x="48" y="245" width="13" height="13"/><use href="#mini" x="67" y="244" width="17" height="14"/>
<use href="#star" x="48" y="263" width="13" height="13"/><use href="#mini" x="67" y="262" width="17" height="14"/>
<use href="#star" x="48" y="281" width="13" height="13"/><use href="#mini" x="67" y="280" width="17" height="14"/>
<circle cx="237.500" cy="37.500" r="5" fill="#fff" stroke="#222" stroke-width="1.300"/><path d="M234 42l-5 5" stroke="#222" stroke-width="1.800"/>

<use href="#draw" x="2" y="469" width="22" height="21"/><use href="#ham" x="47" y="472" width="14" height="13"/>
<path d="M92 476v7l-3-3.500zM403 476v7l3-3.500z" fill="#111"/>
<use href="#cal" x="416" y="470" width="20" height="20"/><use href="#und" x="447" y="472" width="15" height="16"/><use href="#red" x="474" y="472" width="15" height="16"/><use href="#zf" x="497" y="470" width="20" height="20"/><use href="#zm" x="524" y="471" width="19" height="19"/><use href="#zp" x="549" y="471" width="19" height="19"/><use href="#dots" x="575" y="472" width="18" height="18"/>

<use href="#xd" x="335" y="503" width="13" height="13"/><use href="#gear" x="373" y="503" width="16" height="15"/><use href="#xd" x="458" y="503" width="13" height="13"/><use href="#gear" x="495" y="503" width="16" height="15"/>
<use href="#wr" x="528" y="493" width="18" height="16"/><use href="#kb" x="527" y="512" width="18" height="15"/>
<use href="#dn" x="0" y="534" width="11" height="12"/><use href="#up" x="19" y="534" width="12" height="12"/>

<use href="#demo" x="602" y="4" width="22" height="18"/><use href="#link" x="632" y="3" width="12" height="19"/><use href="#info" x="739" y="6" width="12" height="14"/><use href="#ring" x="888" y="8" width="10" height="10"/>
<path d="M1133 12h6M1139 8v8l5-2v-4z" fill="#7f98a8" stroke="#7f98a8"/><path d="M1149 17h10" stroke="#7f98a8" stroke-width="2"/><rect x="1166" y="8" width="9" height="10" fill="none" stroke="#7f98a8" stroke-width="2"/><path d="M1181 8l10 10M1191 8l-10 10" stroke="#7f98a8" stroke-width="2.400"/>
<use href="#xd" x="682" y="158" width="13" height="13"/><use href="#gear" x="720" y="157" width="16" height="15"/>
<use href="#xd" x="682" y="182" width="13" height="13"/><use href="#gear" x="719" y="181" width="16" height="15"/>
<path d="M858 264l-2.500 2.500h5zM961 264l-2.500 2.500h5z" fill="#111"/><path d="M858 278l-2.500-2.500h5zM961 278l-2.500-2.500h5z" fill="#6d8796"/>
<use href="#tbl" x="600" y="529" width="20" height="18"/><use href="#pos" x="1153" y="529" width="18" height="18"/><use href="#posw" x="1178" y="529" width="17" height="18"/>
<path d="M629 560h7v-2l4 3-4 3v-2h-7z" fill="#3d8fd4"/><path d="M1148 560h-7v-2l-4 3 4 3v-2h7z" fill="#3d8fd4"/>

<use href="#demo" x="1204" y="4" width="22" height="18"/><use href="#link" x="1235" y="3" width="10" height="10"/><path d="M1236 15l4 7 5-8" fill="none" stroke="#1d5fae" stroke-width="2"/><use href="#info" x="1473" y="6" width="12" height="14"/><use href="#ring" x="1626" y="8" width="10" height="10"/><use href="#sync" x="1838" y="3" width="21" height="21"/>
<path d="M1866 17h10" stroke="#7f98a8" stroke-width="2"/><rect x="1881" y="8" width="9" height="10" fill="none" stroke="#7f98a8" stroke-width="2"/>
<use href="#wr" x="1845" y="27" width="18" height="16"/><use href="#kb" x="1845" y="46" width="18" height="15"/>
<use href="#xd" x="1615" y="37" width="13" height="13"/><use href="#gear" x="1654" y="37" width="16" height="15"/><use href="#xd" x="1757" y="37" width="13" height="13"/><use href="#gear" x="1795" y="37" width="16" height="15"/>
<use href="#dn" x="1204" y="68" width="12" height="12"/><use href="#up" x="1224" y="68" width="12" height="12"/>
<use href="#draw" x="1206" y="562" width="22" height="21"/><use href="#ham" x="1251" y="565" width="14" height="13"/>
<path d="M1296 568v7l-3-3.500zM1721 568v7l3-3.500z" fill="#111"/>
<use href="#cal" x="1735" y="562" width="20" height="21"/><use href="#und" x="1765" y="565" width="15" height="16"/><use href="#red" x="1792" y="565" width="15" height="16"/><use href="#zf" x="1815" y="563" width="20" height="20"/><use href="#zm" x="1842" y="563" width="19" height="19"/><use href="#zp" x="1867" y="563" width="19" height="19"/>
</svg>
</body></html>
